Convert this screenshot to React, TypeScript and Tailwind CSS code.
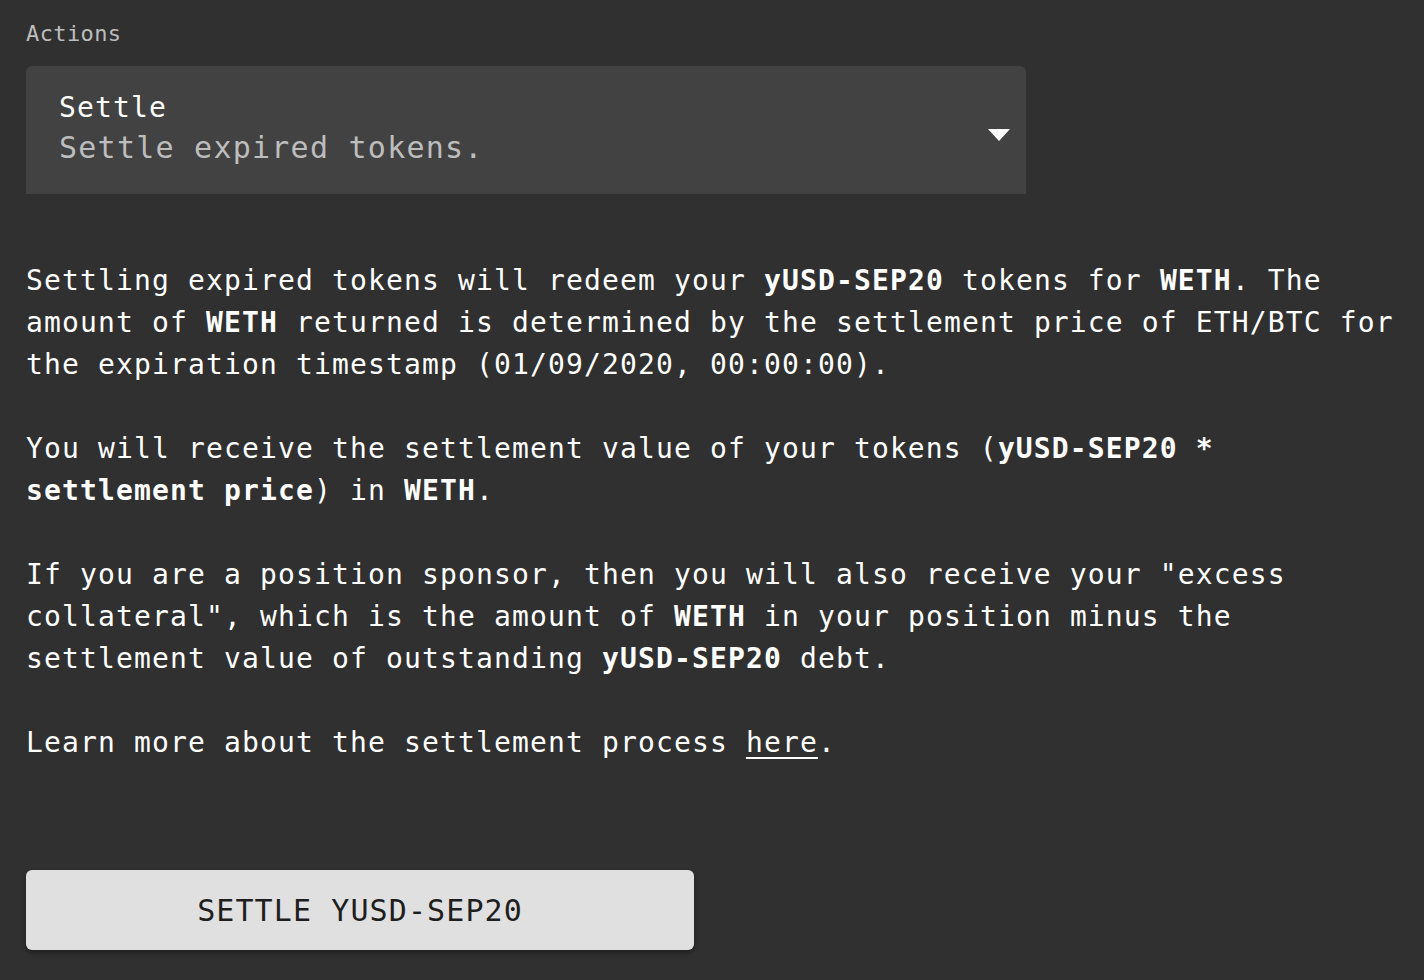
import React from "react";

const mono = { fontFamily: '"DejaVu Sans Mono", "Liberation Mono", monospace' };

const B = ({ children }: { children: React.ReactNode }) => (
  <strong className="font-bold">{children}</strong>
);

const App = () => {
  return (
    <div className="min-h-[980px] w-full bg-[#303030] px-[26px] pt-[21px] pb-10" style={mono}>
      <div className="text-[22px] leading-[26px] tracking-[0.4px] text-[#bdbdbd]">Actions</div>

      <div className="mt-[19px] flex h-[128px] w-[1000px] items-center justify-between rounded-t-[6px] bg-[#424242] pl-[33px] pr-[16px]">
        <div className="self-start pt-[24px]">
          <div className="text-[28px] leading-[36px] tracking-[1.14px] text-white">Settle</div>
          <div className="mt-[2px] text-[30px] leading-[40px] tracking-[1.24px] text-[#bdbdbd]">
            Settle expired tokens.
          </div>
        </div>
        <svg width="22" height="12" viewBox="0 0 22 12" className="mt-[10px]">
          <polygon points="0,0 22,0 11,12" fill="#ffffff" />
        </svg>
      </div>

      <div className="mt-[66px] w-[1372px] text-[28px] leading-[42px] tracking-[1.14px] text-white">
        <p>
          Settling expired tokens will redeem your <B>yUSD-SEP20</B> tokens for <B>WETH</B>. The
          amount of <B>WETH</B> returned is determined by the settlement price of ETH/BTC for the
          expiration timestamp (01/09/2020, 00:00:00).
        </p>
        <p className="mt-[42px]">
          You will receive the settlement value of your tokens (<B>yUSD-SEP20 * settlement price</B>)
          in <B>WETH</B>.
        </p>
        <p className="mt-[42px]">
          If you are a position sponsor, then you will also receive your "excess collateral", which
          is the amount of <B>WETH</B> in your position minus the settlement value of outstanding{" "}
          <B>yUSD-SEP20</B> debt.
        </p>
        <p className="mt-[42px]">
          Learn more about the settlement process{" "}
          <a href="#" className="underline underline-offset-[5px]">
            here
          </a>
          .
        </p>
      </div>

      <button
        type="button"
        className="mt-[106px] flex h-[80px] w-[668px] items-center justify-center rounded-[6px] bg-[#e0e0e0] text-[30px] tracking-[1.1px] text-[#1e1e1e] shadow-[0_3px_5px_rgba(0,0,0,0.35)]"
      >
        SETTLE YUSD-SEP20
      </button>
    </div>
  );
};

export default App;
